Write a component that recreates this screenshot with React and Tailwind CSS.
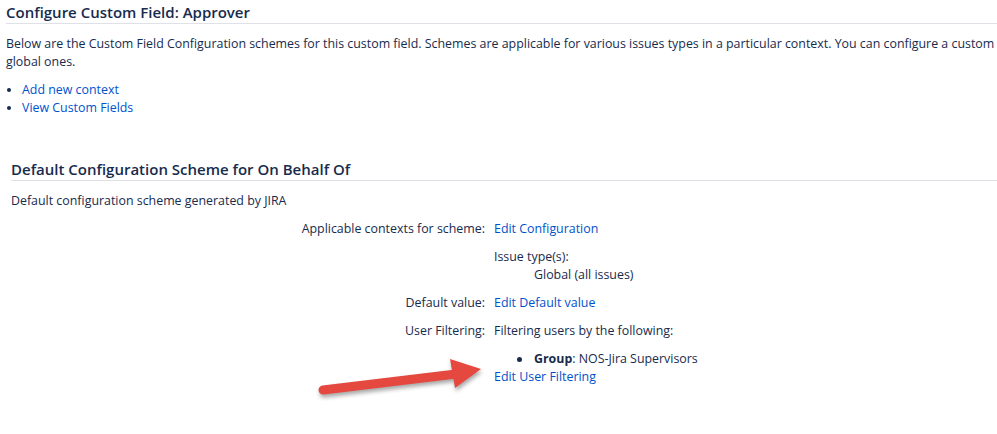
import React from "react";

function Row({ label, children }) {
  return (
    <div className="grid grid-cols-[474px_1fr] gap-x-[9px]">
      <div className="text-right">{label}</div>
      <div>{children}</div>
    </div>
  );
}

function Arrow() {
  return (
    <svg
      className="pointer-events-none absolute left-0 top-0 drop-shadow-[1px_3px_2px_rgba(0,0,0,0.35)]"
      width="997"
      height="434"
      viewBox="0 0 997 434"
    >
      <line
        x1="323"
        y1="390"
        x2="456"
        y2="374"
        stroke="#e5483f"
        strokeWidth="9"
        strokeLinecap="round"
      />
      <polygon points="450,359 481,369 455,388" fill="#e5483f" />
    </svg>
  );
}

export default function App() {
  const font = { fontFamily: '"Open Sans", "Noto Sans", sans-serif' };
  return (
    <div
      className="relative h-[434px] w-[997px] overflow-hidden bg-white text-[12.4px] leading-[18px] text-[#172b4d]"
      style={font}
    >
      <div className="w-[1200px]">
        {/* page header */}
        <div className="pl-[6px] pt-[2px]">
          <h2 className="border-b border-[#dfe1e6] pb-[1px] text-[15px] font-semibold leading-[20px]">
            Configure Custom Field: Approver
          </h2>
          <p className="mt-[11px] whitespace-nowrap">
            Below are the Custom Field Configuration schemes for this custom field. Schemes are applicable for various
            issues types in a particular context. You can configure a custom field to behave differently for different
            contexts. Specific contexts will override
            <br />
            global ones.
          </p>
          <ul className="mt-[10px] list-disc pl-[16px]">
            <li>
              <a href="#" className="text-[#0052cc]">Add new context</a>
            </li>
            <li>
              <a href="#" className="text-[#0052cc]">View Custom Fields</a>
            </li>
          </ul>
        </div>

        {/* scheme */}
        <div className="mt-[42px] pl-[11px]">
          <h3 className="border-b border-[#dfe1e6] pb-[1px] text-[15px] font-semibold leading-[20px]">
            Default Configuration Scheme for On Behalf Of
          </h3>
          <p className="mt-[11px]">Default configuration scheme generated by JIRA</p>

          <div className="mt-[10px] flex flex-col gap-[10px]">
            <Row label="Applicable contexts for scheme:">
              <a href="#" className="text-[#0052cc]">Edit Configuration</a>
            </Row>
            <Row label="">
              <div>Issue type(s):</div>
              <div className="pl-[40px]">Global (all issues)</div>
            </Row>
            <Row label="Default value:">
              <a href="#" className="text-[#0052cc]">Edit Default value</a>
            </Row>
            <Row label="User Filtering:">
              <div>Filtering users by the following:</div>
              <ul className="mt-[10px]">
                <li className="flex items-center">
                  <span className="ml-[23px] mr-[12px] h-[5px] w-[5px] rounded-full bg-[#172b4d]" />
                  <span>
                    <span className="font-bold">Group</span>: NOS-Jira Supervisors
                  </span>
                </li>
              </ul>
              <a href="#" className="text-[#0052cc]">Edit User Filtering</a>
            </Row>
          </div>
        </div>
      </div>
      <Arrow />
    </div>
  );
}
